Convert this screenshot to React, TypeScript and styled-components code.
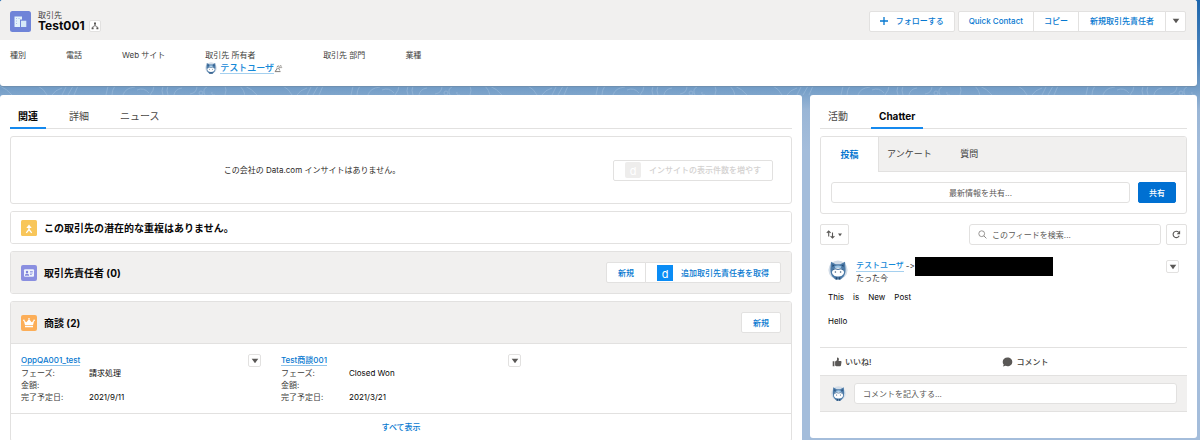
import React from "react";
import styled, { createGlobalStyle, css } from "styled-components";

const GlobalStyle = createGlobalStyle`
  *, *::before, *::after { box-sizing: border-box; }
  html { background: #a4bddb; }
  body {
    margin: 0;
    font-family: Inter, "Noto Sans CJK JP", sans-serif;
    font-size: 8px;
    line-height: 12px;
    font-variant-ligatures: none;
    font-feature-settings: "calt" 0;
    color: #2b2826;
  }
  h1, h2, p, dl, dd, dt { margin: 0; padding: 0; font-size: inherit; }
  button, input { font: inherit; color: inherit; margin: 0; }
  a { color: #0070d2; text-decoration: none; }
  svg { display: block; flex: none; }
`;

const line = "#e2e1e0";
const band = "#f1f0ef";
const blue = "#0678d0";

const Page = styled.div`
  position: relative;
  min-height: 100vh;
  overflow: hidden;
  padding-right: 3px;
  background: linear-gradient(#1a65ad 0, #4f86bd 60px, #769fc8 90px, #9ab6d6 110px, #a4bddb 150px);
`;

const Wallpaper = styled.svg`
  position: absolute;
  inset: 0;
  width: 100%;
  height: 110px;
`;

const Header = styled.header`
  position: relative;
  background: #fff;
  border-radius: 3px;
  overflow: hidden;
  box-shadow: 0 1px 1px #6f8fae;
`;

const HeaderTop = styled.div`
  display: flex;
  align-items: center;
  justify-content: space-between;
  height: 40px;
  padding: 2px 11px 0 10px;
  background: ${band};
`;

const TitleBlock = styled.div`
  display: flex;
  align-items: center;
  gap: 7px;
`;

const ObjectType = styled.p`
  line-height: 10px;
  color: #3e3e3c;
`;

const RecordName = styled.h1`
  display: flex;
  align-items: center;
  gap: 4px;
  font-size: 12px;
  line-height: 12px;
  color: #080707;
`;

const Actions = styled.div`
  display: flex;
  gap: 3px;
`;

const ButtonGroup = styled.div`
  display: flex;
  & > * + * { margin-left: -1px; }
  & > :not(:first-child) { border-top-left-radius: 0; border-bottom-left-radius: 0; }
  & > :not(:last-child) { border-top-right-radius: 0; border-bottom-right-radius: 0; }
`;

const buttonPadding = { narrow: 5, normal: 10, wide: 11 };

const Button = styled.button<{ $brand?: boolean; $fit?: keyof typeof buttonPadding }>`
  display: inline-flex;
  align-items: center;
  justify-content: center;
  gap: 8px;
  height: 21px;
  padding: 0 ${(p) => buttonPadding[p.$fit ?? "normal"]}px;
  border: 1px solid ${line};
  border-radius: 2px;
  background: #fff;
  color: ${blue};
  font-weight: 500;
  white-space: nowrap;
  &:disabled { color: #d3d1d0; }
  ${(p) =>
    p.$brand &&
    css`
      background: #0070d2;
      border-color: #0070d2;
      color: #fff;
    `}
`;

const IconButton = styled.button<{ $size: number }>`
  display: inline-flex;
  align-items: center;
  justify-content: center;
  width: ${(p) => p.$size}px;
  height: ${(p) => p.$size}px;
  padding: 0;
  border: 1px solid ${line};
  border-radius: 2px;
  background: #fff;
  color: #5a5856;
`;

const Fields = styled.dl`
  display: flex;
  gap: 40px;
  height: 46px;
  padding: 9px 10px 0;
`;

const FieldLabel = styled.dt`
  color: #3e3e3c;
  white-space: nowrap;
`;

const Owner = styled.dd`
  display: flex;
  align-items: center;
  height: 14px;
`;

const UserLink = styled.a<{ $large?: boolean }>`
  margin-left: ${(p) => (p.$large ? 3 : 0)}px;
  font-size: ${(p) => (p.$large ? 9 : 8)}px;
  line-height: 11px;
  font-weight: 500;
  color: #1589d8;
  border-bottom: 1px solid #a5d0ef;
`;

const Columns = styled.div`
  position: relative;
  display: grid;
  grid-template-columns: 802fr 387fr;
  gap: 8px;
  align-items: start;
  margin-top: 9px;
`;

const Panel = styled.section`
  padding: 10px 10px 26px;
  border-radius: 3px;
  background: #fff;
  min-width: 0;
`;

const TabBar = styled.div`
  display: flex;
  gap: 15px;
  height: 24px;
  border-bottom: 1px solid ${line};
`;

const Tab = styled.button<{ $active?: boolean }>`
  height: 24px;
  padding: 0 8px;
  border: 0;
  border-bottom: 2px solid ${(p) => (p.$active ? "#1589ee" : "transparent")};
  background: none;
  font-size: 10px;
  line-height: 22px;
  font-weight: ${(p) => (p.$active ? 700 : 400)};
  color: ${(p) => (p.$active ? "#080707" : "#4a4846")};
`;

const Card = styled.article`
  margin-top: 7px;
  border: 1px solid ${line};
  border-radius: 3px;
  background: #fff;
  overflow: hidden;
`;

const Insight = styled.div`
  display: grid;
  grid-template-columns: 602fr 178fr;
  align-items: center;
  height: 66px;
  text-align: center;
  & > :last-child { justify-self: start; }
`;

const CardHead = styled.div<{ $plain?: boolean }>`
  display: flex;
  align-items: center;
  gap: 7px;
  height: ${(p) => (p.$plain ? 31 : 41)}px;
  padding: 0 10px;
  background: ${(p) => (p.$plain ? "#fff" : band)};
`;

const CardTitle = styled.h2`
  flex: 1;
  font-size: 10px;
  color: #080707;
`;

const DealGrid = styled.div`
  display: grid;
  grid-template-columns: repeat(3, 1fr);
  border-top: 1px solid ${line};
  border-bottom: 1px solid ${line};
`;

const Deal = styled.div`
  padding: 10px;
`;

const DealHead = styled.div`
  display: flex;
  align-items: center;
  justify-content: space-between;
  height: 13px;
`;

const DealLink = styled.a`
  line-height: 10px;
  font-weight: 500;
  color: ${blue};
  border-bottom: 1px solid #8fc4ea;
`;

const Facts = styled.dl`
  display: grid;
  grid-template-columns: 68px 1fr;
  dt { color: #3e3e3c; }
  dd { color: #080707; }
`;

const ViewAll = styled.a`
  display: block;
  height: 27px;
  line-height: 27px;
  text-align: center;
  font-weight: 500;
  color: ${blue};
`;

const PublisherTabs = styled.div`
  display: flex;
  height: 35px;
  background: ${band};
  border-bottom: 1px solid ${line};
`;

const PublisherTab = styled.button<{ $active?: boolean }>`
  min-width: 58px;
  height: ${(p) => (p.$active ? 35 : 34)}px;
  padding: 0 8px;
  border: 0;
  border-right: 1px solid ${(p) => (p.$active ? line : "transparent")};
  background: ${(p) => (p.$active ? "#fff" : "none")};
  color: ${(p) => (p.$active ? blue : "#3e3e3c")};
  font-size: 9px;
  font-weight: ${(p) => (p.$active ? 700 : 400)};
`;

const Row = styled.div`
  display: flex;
  align-items: center;
  gap: 8px;
  padding: 10px;
`;

const TextInput = styled.input<{ $center?: boolean }>`
  flex: 1;
  min-width: 0;
  height: 21px;
  padding: 0 8px;
  border: 1px solid ${line};
  border-radius: 3px;
  background: #fff;
  text-align: ${(p) => (p.$center ? "center" : "left")};
  outline: none;
  &::placeholder { color: #5a5856; opacity: 1; }
`;

const FeedTools = styled.div`
  display: flex;
  align-items: center;
  gap: 5px;
  margin-top: 10px;
`;

const Search = styled.label`
  display: flex;
  align-items: center;
  width: 192px;
  height: 21px;
  margin-left: auto;
  padding-left: 8px;
  border: 1px solid ${line};
  border-radius: 3px;
  ${TextInput} { height: 19px; padding: 0 5px; border: 0; }
`;

const PostHead = styled.div`
  display: flex;
  align-items: flex-start;
  gap: 8px;
  margin-top: 15px;
  padding: 0 8px;
`;

const PostMeta = styled.div`
  flex: 1;
`;

const PostLine = styled.p`
  display: flex;
  align-items: center;
  gap: 2px;
  height: 12px;
`;

const Recipient = styled.span`
  display: flex;
  align-items: center;
`;

const Redacted = styled.span`
  width: 138px;
  height: 19px;
  background: #000;
`;

const PostBody = styled.div`
  height: 56px;
  margin-top: 7px;
  padding: 0 8px;
  color: #080707;
  white-space: pre;
`;

const PostActions = styled.div`
  display: grid;
  grid-template-columns: 170fr 176fr;
  align-items: center;
  height: 28px;
  padding: 0 8px 0 12px;
  border-top: 1px solid ${line};
`;

const PostAction = styled.button`
  display: flex;
  align-items: center;
  gap: 3px;
  padding: 0;
  border: 0;
  background: none;
  font-weight: 500;
  color: #3e3e3c;
`;

const CommentBar = styled.div`
  display: flex;
  align-items: center;
  gap: 8px;
  height: 37px;
  padding: 0 10px 0 11px;
  border-top: 1px solid ${line};
  border-bottom: 1px solid ${line};
  background: ${band};
`;

const Caret = () => (
  <svg width="8" height="6" viewBox="0 0 8 6" aria-hidden="true">
    <path d="M.7.8h6.6L4 5.2Z" fill="#5a5856" />
  </svg>
);

const Avatar = ({ size }: { size: number }) => (
  <svg width={size} height={size} viewBox="0 0 20 20" aria-hidden="true">
    <circle cx="10" cy="10" r="9.6" fill="#d3dde8" />
    <path d="M3 1.800 7.600 4.200h4.800L17 1.800l.6 7.400q0 6-3 8.400L12.600 19.600H7.400L5.400 17.600q-3-2.400-3-8.400Z" fill="#4d7ba8" />
    <path d="M4.400 4.200 6.600 5.600 4.400 7ZM15.600 4.200 13.400 5.600 15.600 7Z" fill="#274d77" />
    <path d="M6.500 6.600Q10 4.400 13.500 6.600L12.600 8.200H7.400Z" fill="#9cc4e4" />
    <ellipse cx="10" cy="12.200" rx="6" ry="4.400" fill="#fff" />
    <path d="M4.400 10.200Q6.800 7.800 10 9.400q3.200-1.600 5.600.8" stroke="#315f8f" strokeWidth="1" fill="none" />
    <circle cx="7.400" cy="12" r=".8" fill="#44607e" />
    <circle cx="12.600" cy="12" r=".8" fill="#44607e" />
    <path d="M7.800 17.200h1.400v2.400H7.800ZM10.800 17.200h1.400v2.400h-1.400Z" fill="#244a72" />
  </svg>
);

const AccountIcon = () => (
  <svg width="21" height="21" viewBox="0 0 21 21" aria-hidden="true">
    <rect width="21" height="21" rx="2.500" fill="#6f84d8" />
    <path d="M4.500 5.500h7.500v3H10v7.500H4.500Z" fill="#e3f3fb" />
    <path d="M11 9.700h5.300V16H11Z" fill="#d6eaf8" />
    <path d="M6 7.500h1M8.500 7.500h1M6 10h1M6 12.500h1" stroke="#a9bbea" strokeWidth="1" />
  </svg>
);

const HierarchyIcon = () => (
  <svg width="8" height="8" viewBox="0 0 8 8" aria-hidden="true">
    <path d="M4 2v2.200M1.700 6V4.800L4 3.600l2.300 1.200V6" stroke="#5a5856" strokeWidth=".7" fill="none" />
    <path d="M3 .6h2v1.800H3ZM.6 5.400h2v1.900h-2ZM5.400 5.400h2v1.900h-2Z" fill="#5a5856" />
  </svg>
);

const ChangeOwnerIcon = () => (
  <svg width="9" height="9" viewBox="0 0 9 9" aria-hidden="true">
    <path d="M.8 7.600h5.700M1.600 7.200q0-1.500 1.500-2V3.800M3 3.200q.4-1.400 1.500-1.200 1.200.3.7 1.800l-.6 1.200 1.500 1.300" stroke="#77736f" strokeWidth=".9" fill="none" />
    <path d="M5.800 1.600h1.300v2.200M6.200 3.200l.9.9.9-.9" stroke="#77736f" strokeWidth=".6" fill="none" />
  </svg>
);

const MergeIcon = () => (
  <svg width="16" height="16" viewBox="0 0 16 16" aria-hidden="true">
    <rect width="16" height="16" rx="1.500" fill="#f8c65a" />
    <path d="M8 6v3.500L5.300 12.800M8 9.500l2.700 3.300" stroke="#fff" strokeWidth="1.300" fill="none" />
    <path d="M8 4.600 10.700 8H5.300Z" fill="#fff" />
  </svg>
);

const ContactIcon = () => (
  <svg width="16" height="16" viewBox="0 0 16 16" aria-hidden="true">
    <rect width="16" height="16" rx="2" fill="#8a8fe0" />
    <rect x="3" y="4.300" width="10" height="7.400" rx="1" fill="#eef3fc" />
    <circle cx="6" cy="7" r="1.200" fill="#7c83da" />
    <path d="M4 10.200q2-2.600 4 0ZM9 6.500h2.800M9 8h2.800M9 9.500h1.800" fill="#7c83da" stroke="#7c83da" strokeWidth=".7" />
  </svg>
);

const CrownIcon = () => (
  <svg width="16" height="16" viewBox="0 0 16 16" aria-hidden="true">
    <rect width="16" height="16" rx="2" fill="#fcae58" />
    <path d="m2.800 5.600 2.600 1.700L8 4l2.600 3.300 2.600-1.700-1.200 4.600H4Z" fill="#fff" />
    <path d="M4 11h8v1.200H4Z" fill="#fff" />
    <circle cx="8" cy="3.700" r=".8" fill="#fff" />
    <circle cx="2.900" cy="5.400" r=".8" fill="#fff" />
    <circle cx="13.100" cy="5.400" r=".8" fill="#fff" />
  </svg>
);

const DataBadge = styled.span<{ $muted?: boolean }>`
  width: 16px;
  height: 16px;
  border-radius: ${(p) => (p.$muted ? 2 : 0)}px;
  background: ${(p) => (p.$muted ? "#eeedec" : "#0a8cf5")};
  color: #fff;
  font-size: 11px;
  line-height: 18px;
  font-weight: 400;
  text-align: center;
`;

const SortIcon = () => (
  <svg width="17" height="9" viewBox="0 0 17 9" aria-hidden="true">
    <path d="M2.700 6.500V1.200M.8 2.900 2.700 1l1.900 1.900M6.500 2.500v5.300M4.600 6.100 6.500 8l1.900-1.900" stroke="#5a5856" strokeWidth="1.100" fill="none" />
    <path d="M12 3.500h4l-2 2.800Z" fill="#5a5856" />
  </svg>
);

const SearchIcon = () => (
  <svg width="9" height="9" viewBox="0 0 9 9" aria-hidden="true">
    <circle cx="3.700" cy="3.700" r="2.900" stroke="#8c8a88" strokeWidth=".9" fill="none" />
    <path d="m5.800 5.800 2.600 2.600" stroke="#8c8a88" strokeWidth="1" />
  </svg>
);

const RefreshIcon = () => (
  <svg width="9" height="9" viewBox="0 0 9 9" aria-hidden="true">
    <path d="M7.200 5.800A3.200 3.200 0 1 1 6.600 2.200" stroke="#5a5856" strokeWidth="1.100" fill="none" />
    <path d="M8.100.6v3.600H4.700Z" fill="#5a5856" />
  </svg>
);

const LikeIcon = () => (
  <svg width="10" height="10" viewBox="0 0 10 10" aria-hidden="true">
    <path d="M.7 4.300h1.700v5H.7ZM3.100 4.600 5 3.200V1q.1-.6.800-.5 1.300.4 1.100 2L6.600 4h2.100q.9.100.8 1L9 8.300q-.2.900-1 .9H4.500q-.6 0-1.400-.6Z" fill="#5a5856" />
  </svg>
);

const CommentIcon = () => (
  <svg width="11" height="10" viewBox="0 0 11 10" aria-hidden="true">
    <path d="M5.500.6c2.700 0 4.800 1.900 4.800 4.300S8.200 9.200 5.500 9.200q-1 0-1.900-.4L1 9.600l.7-2.100Q.7 6.400.7 4.900C.7 2.500 2.800.6 5.500.6Z" fill="#5a5856" />
  </svg>
);

const deals = [
  { name: "OppQA001_test", phase: "請求処理", amount: "", close: "2021/9/11" },
  { name: "Test商談001", phase: "Closed Won", amount: "", close: "2021/3/21" },
];

export default function App() {
  return (
    <Page>
      <GlobalStyle />
      <Wallpaper aria-hidden="true">
        <defs>
          <pattern id="contours" x="0" y="0" width="245" height="110" patternUnits="userSpaceOnUse">
            <g fill="none" stroke="#a3c0dd" strokeWidth="1" opacity=".5">
              <path d="M0 86q7 3 12 9M38 86q6 3 9 9M52 95q3-5 10-7M62 95l4-8M68 95l5-9M74 95l4-9M106 95l2-9M112 95q0-5 3-9M123 95q2-7 12-8M137 90q7-3 12 3M150 95q4-5 4-9M163 86q-2 5 0 9M168 86q-2 4 0 9M174 95q1-6 8-7M190 94q7-1 7-8M205 95q-3-6 2-8M212 92q-1 3 3 3M225 86q2 4 0 9M240 86q4 4 5 9" />
              <circle cx="201" cy="93" r="2" />
            </g>
          </pattern>
        </defs>
        <rect width="100%" height="110" fill="url(#contours)" />
      </Wallpaper>

      <Header>
        <HeaderTop>
          <TitleBlock>
            <AccountIcon />
            <div>
              <ObjectType>取引先</ObjectType>
              <RecordName>
                Test001
                <IconButton $size={12} aria-label="階層を表示">
                  <HierarchyIcon />
                </IconButton>
              </RecordName>
            </div>
          </TitleBlock>
          <Actions>
            <Button>
              <svg width="8" height="8" viewBox="0 0 8 8" aria-hidden="true">
                <path d="M4 0v8M0 4h8" stroke={blue} strokeWidth="1.300" />
              </svg>
              フォローする
            </Button>
            <ButtonGroup>
              <Button>Quick Contact</Button>
              <Button>コピー</Button>
              <Button $fit="wide">新規取引先責任者</Button>
              <IconButton $size={21} aria-label="その他のアクション">
                <Caret />
              </IconButton>
            </ButtonGroup>
          </Actions>
        </HeaderTop>
        <Fields>
          <div><FieldLabel>種別</FieldLabel></div>
          <div><FieldLabel>電話</FieldLabel></div>
          <div><FieldLabel>Web サイト</FieldLabel></div>
          <div>
            <FieldLabel>取引先 所有者</FieldLabel>
            <Owner>
              <Avatar size={12} />
              <UserLink $large href="#user">テストユーザ</UserLink>
              <ChangeOwnerIcon />
            </Owner>
          </div>
          <div><FieldLabel>取引先 部門</FieldLabel></div>
          <div><FieldLabel>業種</FieldLabel></div>
        </Fields>
      </Header>

      <Columns>
        <Panel>
          <TabBar>
            <Tab $active>関連</Tab>
            <Tab>詳細</Tab>
            <Tab>ニュース</Tab>
          </TabBar>

          <Card>
            <Insight>
              <p>この会社の Data.com インサイトはありません。</p>
              <Button $fit="wide" disabled>
                <DataBadge $muted>d</DataBadge>
                インサイトの表示件数を増やす
              </Button>
            </Insight>
          </Card>

          <Card>
            <CardHead $plain>
              <MergeIcon />
              <CardTitle>この取引先の潜在的な重複はありません。</CardTitle>
            </CardHead>
          </Card>

          <Card>
            <CardHead>
              <ContactIcon />
              <CardTitle>取引先責任者 (0)</CardTitle>
              <ButtonGroup>
                <Button $fit="wide">新規</Button>
                <Button $fit="wide">
                  <DataBadge>d</DataBadge>
                  追加取引先責任者を取得
                </Button>
              </ButtonGroup>
            </CardHead>
          </Card>

          <Card>
            <CardHead>
              <CrownIcon />
              <CardTitle>商談 (2)</CardTitle>
              <Button $fit="wide">新規</Button>
            </CardHead>
            <DealGrid>
              {deals.map((d) => (
                <Deal key={d.name}>
                  <DealHead>
                    <DealLink href="#deal">{d.name}</DealLink>
                    <IconButton $size={13} aria-label="アクションを表示">
                      <Caret />
                    </IconButton>
                  </DealHead>
                  <Facts>
                    <dt>フェーズ:</dt>
                    <dd>{d.phase}</dd>
                    <dt>金額:</dt>
                    <dd>{d.amount}</dd>
                    <dt>完了予定日:</dt>
                    <dd>{d.close}</dd>
                  </Facts>
                </Deal>
              ))}
            </DealGrid>
            <ViewAll href="#all">すべて表示</ViewAll>
          </Card>
        </Panel>

        <Panel>
          <TabBar>
            <Tab>活動</Tab>
            <Tab $active>Chatter</Tab>
          </TabBar>

          <Card>
            <PublisherTabs>
              <PublisherTab $active>投稿</PublisherTab>
              <PublisherTab>アンケート</PublisherTab>
              <PublisherTab>質問</PublisherTab>
            </PublisherTabs>
            <Row>
              <TextInput $center aria-label="最新情報を共有" placeholder="最新情報を共有..." />
              <Button $brand>共有</Button>
            </Row>
          </Card>

          <FeedTools>
            <Button $fit="narrow" aria-label="並び替え">
              <SortIcon />
            </Button>
            <Search>
              <SearchIcon />
              <TextInput aria-label="このフィードを検索" placeholder="このフィードを検索..." />
            </Search>
            <IconButton $size={21} aria-label="更新">
              <RefreshIcon />
            </IconButton>
          </FeedTools>

          <PostHead>
            <Avatar size={20} />
            <PostMeta>
              <PostLine>
                <UserLink href="#user">テストユーザ</UserLink>
                <Recipient>
                  -&gt;
                  <Redacted />
                </Recipient>
              </PostLine>
              <PostLine>たった今</PostLine>
            </PostMeta>
            <IconButton $size={13} aria-label="投稿のアクション">
              <Caret />
            </IconButton>
          </PostHead>
          <PostBody>
            <p>{"This    is    New    Post"}</p>
            <p> </p>
            <p>Hello</p>
          </PostBody>
          <PostActions>
            <PostAction><LikeIcon />いいね!</PostAction>
            <PostAction><CommentIcon />コメント</PostAction>
          </PostActions>
          <CommentBar>
            <Avatar size={15} />
            <TextInput aria-label="コメント" placeholder="コメントを記入する..." />
          </CommentBar>
        </Panel>
      </Columns>
    </Page>
  );
}
